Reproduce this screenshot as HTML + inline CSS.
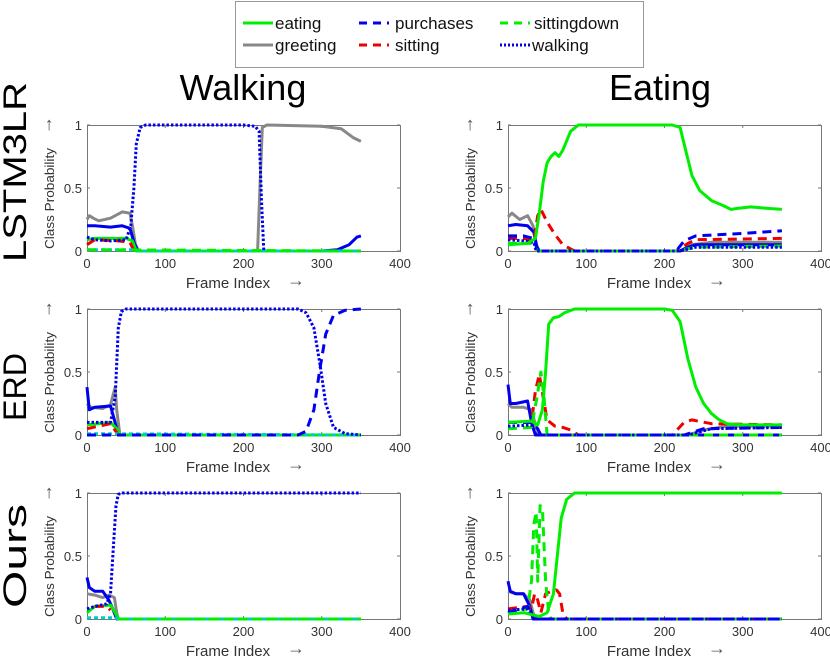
<!DOCTYPE html>
<html><head><meta charset="utf-8"><style>
html,body{margin:0;padding:0;background:#fff;}
svg{display:block;font-family:"Liberation Sans","DejaVu Sans",sans-serif;}
</style></head><body>
<svg id="s" width="830" height="657" viewBox="0 0 830 657" xmlns="http://www.w3.org/2000/svg">
<rect x="0" y="0" width="830" height="657" fill="#fff"/>
<rect x="235.5" y="1.5" width="408" height="66" fill="#fff" stroke="#999" stroke-width="1"/>
<g font-size="17" fill="#111">
<line x1="243" y1="23" x2="273" y2="23" stroke="#00ee00" stroke-width="3"/>
<text x="275" y="29">eating</text>
<line x1="243" y1="45" x2="273" y2="45" stroke="#888" stroke-width="3"/>
<text x="275" y="51">greeting</text>
<line x1="359" y1="23" x2="389" y2="23" stroke="#0000ee" stroke-width="3" stroke-dasharray="8,6"/>
<text x="395" y="29">purchases</text>
<line x1="359" y1="45" x2="389" y2="45" stroke="#ee0000" stroke-width="3" stroke-dasharray="8,6"/>
<text x="395" y="51">sitting</text>
<line x1="500" y1="23" x2="530" y2="23" stroke="#00ee00" stroke-width="3" stroke-dasharray="8,6"/>
<text x="534" y="29">sittingdown</text>
<line x1="500" y1="45" x2="530" y2="45" stroke="#0000ee" stroke-width="3" stroke-dasharray="2,2"/>
<text x="532" y="51">walking</text>
</g>
<text x="243" y="100" font-size="36" text-anchor="middle" fill="#000">Walking</text>
<text x="660" y="100" font-size="36" text-anchor="middle" fill="#000">Eating</text>
<g font-size="32" fill="#000" text-anchor="middle">
<text transform="translate(26,172) rotate(-90)" textLength="180" lengthAdjust="spacingAndGlyphs">LSTM3LR</text>
<text transform="translate(26,387) rotate(-90)" textLength="68" lengthAdjust="spacingAndGlyphs">ERD</text>
<text transform="translate(26,556) rotate(-90)" textLength="104" lengthAdjust="spacingAndGlyphs">Ours</text>
</g>
<g id="axes"></g>
<g id="curves"></g>
</svg>
<script>
var NS="http://www.w3.org/2000/svg";
var AX=document.getElementById("axes"),CV=document.getElementById("curves");
function el(t,a,txt,p){var e=document.createElementNS(NS,t);for(var k in a)e.setAttribute(k,a[k]);if(txt!==undefined&&txt!==null)e.textContent=txt;(p||AX).appendChild(e);return e;}
var XS=[87,508],YS=[251,435,619],W=313,H=126;
function axes(x0,y0){
 el("rect",{x:x0+.5,y:y0-H+.5,width:W,height:H,fill:"none",stroke:"#777","stroke-width":1});
 [0,100,200,300,400].forEach(function(v){var x=x0+v*W/400;
  el("text",{x:x,y:y0+17,"text-anchor":"middle",fill:"#333","font-size":"13"},""+v);
  if(v>0&&v<400){el("line",{x1:x,y1:y0,x2:x,y2:y0-3,stroke:"#777"});el("line",{x1:x,y1:y0-H,x2:x,y2:y0-H+3,stroke:"#777"});}
 });
 [[0,"0"],[0.5,"0.5"],[1,"1"]].forEach(function(a){var y=y0-a[0]*H;
  el("text",{x:x0-5,y:y+5,"text-anchor":"end",fill:"#333","font-size":"13"},a[1]);
  el("line",{x1:x0,y1:y,x2:x0+3,y2:y,stroke:"#777"});el("line",{x1:x0+W,y1:y,x2:x0+W-3,y2:y,stroke:"#777"});
 });
 el("text",{x:x0+141,y:y0+37,"text-anchor":"middle",fill:"#333","font-size":"15"},"Frame Index");
 el("text",{x:x0+209,y:y0+35,"text-anchor":"middle",fill:"#555","font-size":"18"},"\u2192");
 el("text",{transform:"translate("+(x0-33)+","+(y0-2)+") rotate(-90)","text-anchor":"start",fill:"#333","font-size":"13",textLength:"101",lengthAdjust:"spacingAndGlyphs"},"Class Probability");
 el("text",{transform:"translate("+(x0-35)+","+(y0-H)+") rotate(-90)","text-anchor":"middle",fill:"#555","font-size":"18"},"\u2192");
}
var styles={
 eat:{stroke:"#00ee00"},greet:{stroke:"#888888"},pur:{stroke:"#0000ee","stroke-dasharray":"9,6"},
 sit:{stroke:"#ee0000","stroke-dasharray":"9,6"},sd:{stroke:"#00ee00","stroke-dasharray":"9,6"},
 walk:{stroke:"#0000ee","stroke-dasharray":"2.5,2"},blue:{stroke:"#0000ee"},cyan:{stroke:"#00cccc","stroke-dasharray":"4,3"}
};
function curve(x0,y0,st,pts){var d="";for(var i=0;i<pts.length;i+=2){d+=(i?"L":"M")+(x0+pts[i]*W/400).toFixed(1)+","+(y0-pts[i+1]*H).toFixed(1);}
 var a={d:d,fill:"none","stroke-width":3,"stroke-linejoin":"round"};for(var k in styles[st])a[k]=styles[st][k];el("path",a,null,CV);}
var data=[
 [0,0,[["greet",[0,.25,3,.28,8,.26,15,.24,30,.26,45,.31,55,.3,58,.2,62,.05,66,0,218,0,221,.5,224,.98,230,1,300,.99,325,.97,340,.9,350,.87]],
  ["blue",[0,.2,10,.2,30,.19,45,.2,55,.18,60,.07,65,0,300,0,320,.01,335,.05,345,.11,350,.12]],
  ["eat",[0,.09,10,.1,50,.1,58,.08,63,0,350,0]],
  ["sit",[0,.05,10,.09,40,.08,55,.07,60,0]],
  ["cyan",[0,.01,60,.01,65,0,350,0]],["sd",[0,.01,350,0]],
  ["walk",[0,.11,10,.09,30,.08,50,.09,56,.2,60,.5,63,.85,68,.98,75,1,200,1,215,.99,220,.95,223,.4,226,0]]]],
 [1,0,[["greet",[0,.27,5,.3,15,.25,25,.28,32,.2,36,.05,40,0,220,0,235,.05,260,.07,350,.07]],
  ["blue",[0,.2,10,.21,25,.2,33,.15,37,.03,40,0,220,0,230,.03,240,.05,350,.05]],
  ["sit",[0,.1,20,.1,33,.08,38,.28,42,.33,50,.23,60,.13,70,.05,85,0,215,0,230,.06,240,.09,350,.1]],
  ["pur",[0,.12,20,.12,33,.1,38,0,215,0,225,.08,240,.12,300,.14,350,.16]],
  ["sd",[0,.06,30,.06,38,0,215,0,240,.03,350,.04]],
  ["walk",[0,.09,20,.08,33,.07,36,0,220,0,240,.03,350,.03]],
  ["eat",[0,.05,25,.06,35,.1,40,.3,45,.55,50,.7,55,.75,60,.78,65,.75,70,.8,80,.95,90,1,210,1,220,.98,225,.85,235,.6,245,.48,260,.4,275,.36,285,.33,295,.34,310,.35,330,.34,350,.33]]]],
 [0,1,[["greet",[0,.25,5,.22,20,.21,30,.24,36,.38,38,.2,42,0,350,0]],
  ["blue",[0,.38,3,.2,10,.22,30,.23,35,.12,40,0,350,0]],
  ["eat",[0,.08,30,.1,38,.05,42,0,350,0]],["sit",[0,.05,30,.09,40,0]],["cyan",[0,.01,350,0]],
  ["pur",[0,0,270,0,280,.03,290,.2,297,.5,305,.8,315,.95,330,.99,350,1]],
  ["walk",[0,.1,30,.1,36,.3,40,.85,44,.98,50,1,270,1,280,.97,290,.85,298,.55,305,.25,315,.06,330,.01,350,0]]]],
 [1,1,[["greet",[0,.25,5,.22,20,.22,30,.2,35,.08,40,0,230,0,250,.04,280,.07,350,.07]],
  ["blue",[0,.4,3,.25,10,.25,25,.27,30,.1,35,0,350,0]],
  ["sit",[0,.1,30,.1,35,.35,40,.48,45,.3,50,.12,60,.07,70,.06,80,.04,90,0,210,0,225,.1,235,.12,260,.09,350,.08]],
  ["sd",[0,.05,30,.06,37,.3,42,.5,46,.3,50,0,350,0]],
  ["pur",[0,.1,30,.1,38,.05,42,0,225,0,250,.05,350,.06]],
  ["walk",[0,.07,30,.08,36,0,230,0,260,.05,350,.06]],
  ["eat",[0,.1,30,.11,38,.08,44,.2,48,.5,52,.88,58,.93,65,.94,72,.97,85,1,200,1,210,.99,220,.9,230,.6,240,.38,250,.25,260,.17,270,.12,280,.09,300,.08,350,.08]]]],
 [0,2,[["greet",[0,.2,10,.19,20,.17,28,.19,35,.17,38,.05,40,0,350,0]],
  ["blue",[0,.33,3,.25,10,.22,20,.22,28,.15,33,.08,38,0,350,0]],
  ["eat",[0,.05,10,.1,30,.11,36,.05,40,0,350,0]],["sit",[10,.1,25,.1,30,.07]],["cyan",[0,.01,35,.01,40,0,350,0]],["sd",[40,0,350,0]],
  ["walk",[0,.08,10,.1,25,.12,30,.2,34,.6,37,.9,40,.99,45,1,350,1]]]],
 [1,2,[["greet",[0,.22,10,.2,20,.2,28,.15,32,.05,36,0,350,0]],
  ["blue",[0,.3,3,.22,10,.2,20,.2,28,.1,32,0,350,0]],
  ["sit",[0,.08,25,.1,30,.08,34,.2,38,.15,42,.05,48,.2,55,.22,62,.23,66,.2,70,.05,75,0,350,0]],
  ["sd",[0,.05,25,.08,30,.3,33,.75,36,.85,38,.3,41,.9,44,.88,48,.3,52,.05,55,0,350,0]],
  ["pur",[0,.05,25,.1,30,.05,34,0,350,0]],
  ["walk",[0,.07,25,.08,30,.04,34,0,350,0]],
  ["eat",[0,.04,20,.05,40,.02,50,.05,58,.2,63,.5,68,.8,75,.95,85,1,100,1,350,1]]]]
];
for(var c=0;c<2;c++)for(var r=0;r<3;r++)axes(XS[c],YS[r]);
data.forEach(function(p){var x0=XS[p[0]],y0=YS[p[1]];p[2].forEach(function(s){curve(x0,y0,s[0],s[1]);});});
</script>
</body></html>
